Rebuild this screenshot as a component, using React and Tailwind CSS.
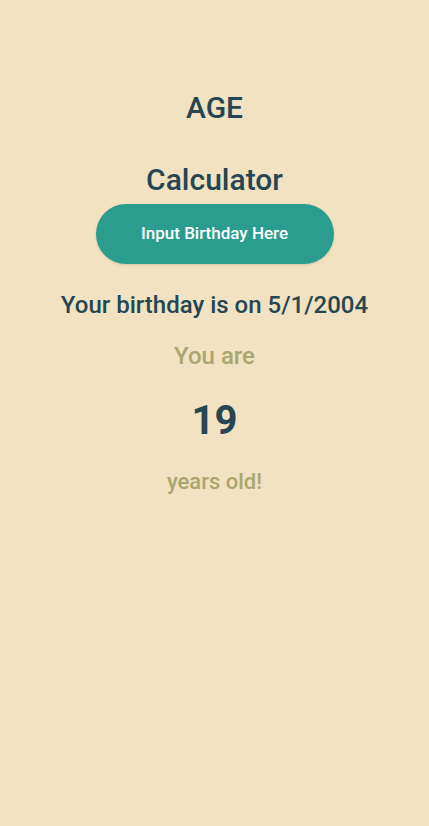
export default function App() {
  return (
    <div className="min-h-[826px] w-full bg-[#f1e2c1] font-['Roboto',sans-serif] text-center">
      <div className="pt-[90px] flex flex-col items-center">
        <h1 className="text-[30px] leading-[36px] font-medium text-[#264653]">
          AGE
          <br />
          <br />
          Calculator
        </h1>
        <button className="mt-[6px] w-[238px] h-[60px] rounded-full bg-[#2a9d8f] text-white text-[17px] font-medium shadow-sm">
          Input Birthday Here
        </button>
        <p className="mt-[26px] text-[24px] leading-[30px] font-medium text-[#264653]">
          Your birthday is on 5/1/2004
        </p>
        <p className="mt-[21px] text-[24px] leading-[30px] font-medium text-[#a9a66f]">
          You are
        </p>
        <p className="mt-[25px] text-[40px] leading-[50px] font-bold text-[#264653]">
          19
        </p>
        <p className="mt-[21px] text-[22px] leading-[30px] font-medium text-[#a9a66f]">
          years old!
        </p>
      </div>
    </div>
  );
}
